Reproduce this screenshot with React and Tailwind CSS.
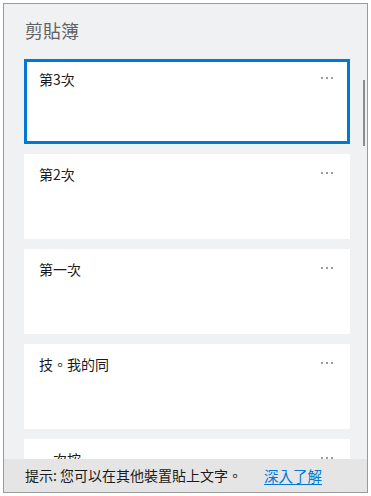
import React from "react";

const items = [
  { text: "第3次", selected: true },
  { text: "第2次" },
  { text: "第一次" },
  { text: "技。我的同" },
  { text: "一次按" },
];

const Dots = () => (
  <div className="flex gap-[3px] pt-[7px]">
    <span className="w-[2px] h-[2px] rounded-full bg-[#7a7a7a]" />
    <span className="w-[2px] h-[2px] rounded-full bg-[#7a7a7a]" />
    <span className="w-[2px] h-[2px] rounded-full bg-[#7a7a7a]" />
  </div>
);

const ClipCard = ({ text, selected }) => (
  <div
    className={`h-[85px] shrink-0 bg-white border-[3px] flex justify-between pl-[12px] pr-[14px] pt-[8px] ${
      selected ? "border-[#0078d4]" : "border-white"
    }`}
  >
    <span className="text-[14px] leading-[18px] text-[#1a1a1a]">{text}</span>
    <Dots />
  </div>
);

export default function App() {
  return (
    <div
      className="w-[371px] h-[496px] bg-white pt-[3px] pl-[3px] pr-[3px] pb-[3px]"
      style={{ fontFamily: '"Noto Sans CJK TC", "Noto Sans", sans-serif' }}
    >
      <div className="w-full h-full border border-[#9a9a9a] bg-[#eff1f3] flex flex-col">
        <div className="h-[55px] pl-[21px] pt-[15px] text-[18px] leading-[22px] text-[#626262]">
          剪貼簿
        </div>
        <div className="relative flex-1 overflow-hidden">
          <div className="flex flex-col gap-[10px] pl-[20px] pr-[17px]">
            {items.map((it) => (
              <ClipCard key={it.text} {...it} />
            ))}
          </div>
          <div className="absolute right-[2px] top-[21px] w-[2px] h-[66px] bg-[#8c8c8c]" />
        </div>
        <div className="h-[33px] bg-[#e5e5e5] flex items-center pl-[21px] text-[14px] text-[#1a1a1a]">
          <span>提示: 您可以在其他裝置貼上文字。</span>
          <a className="ml-[22px] text-[14.5px] text-[#0078d4] underline underline-offset-2">深入了解</a>
        </div>
      </div>
    </div>
  );
}
